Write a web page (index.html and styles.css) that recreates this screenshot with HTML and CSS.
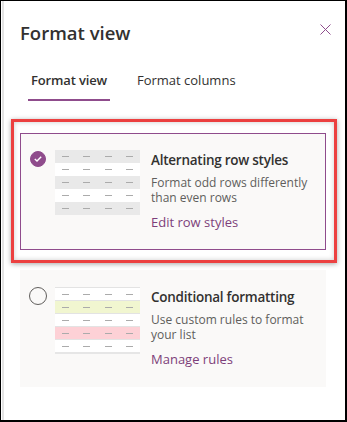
FILE: index.html
```html
<!DOCTYPE html>
<html lang="en">
<head>
  <meta charset="UTF-8" />
  <title>Format view</title>
  <link rel="stylesheet" href="styles.css">
</head>
<body>
  <div class="frame">
    <div class="panel">
      <div class="header">
        <h2 class="title">Format view</h2>
        <button class="close" aria-label="Close">
          <svg width="11" height="11" viewBox="0 0 11 11">
            <path d="M0.5 0.5 L10.5 10.5 M10.5 0.5 L0.5 10.5" stroke="#8f4c8c" stroke-width="1" fill="none" />
          </svg>
        </button>
      </div>

      <!-- Tabs -->
      <div class="tabs">
        <span class="tab active">Format view</span>
        <span class="tab">Format columns</span>
      </div>

      <div class="options">
        <div class="highlight">
          <div class="option selected">
            <div class="radio-slot"><span class="radio checked">
              <svg width="8" height="6" viewBox="0 0 8 6">
                <path d="M0.8 3 L3 5 L7.2 0.8" stroke="#fff" stroke-width="1.4" fill="none" />
              </svg>
            </span></div>
            <div class="thumb">
              <div class="row gray"><i></i><i></i><i></i><i></i></div>
              <div class="row"><i></i><i></i><i></i><i></i></div>
              <div class="row gray"><i></i><i></i><i></i><i></i></div>
              <div class="row"><i></i><i></i><i></i><i></i></div>
              <div class="row gray"><i></i><i></i><i></i><i></i></div>
            </div>
            <div class="text">
              <div class="opt-title">Alternating row styles</div>
              <div class="opt-desc">Format odd rows differently than even rows</div>
              <a class="opt-link">Edit row styles</a>
            </div>
          </div>
        </div>

        <div class="option">
          <div class="radio-slot"><span class="radio"></span></div>
          <div class="thumb lined">
            <div class="row"><i></i><i></i><i></i><i></i></div>
            <div class="row green"><i></i><i></i><i></i><i></i></div>
            <div class="row"><i></i><i></i><i></i><i></i></div>
            <div class="row pink"><i></i><i></i><i></i><i></i></div>
            <div class="row"><i></i><i></i><i></i><i></i></div>
          </div>
          <div class="text">
            <div class="opt-title">Conditional formatting</div>
            <div class="opt-desc">Use custom rules to format your list</div>
            <a class="opt-link">Manage rules</a>
          </div>
        </div>
      </div>
    </div>
  </div>
</body>
</html>
```

FILE: styles.css
```css
html, body {
  margin: 0;
  background: #fff;
}
body {
  font-family: "Open Sans", "Noto Sans", sans-serif;
  color: #323130;
}
.frame {
  width: 347px;
  height: 422px;
  box-sizing: border-box;
  border: 1px solid #000;
  border-right-width: 2px;
  border-bottom-width: 2px;
  padding-left: 1px;
}
.panel {
  height: 100%;
  box-sizing: border-box;
  border-left: 2px solid #e3e3e3;
  padding: 0 19px 0 16px;
}
.header {
  display: flex;
  justify-content: space-between;
  align-items: flex-start;
  padding-top: 18px;
}
.title {
  margin: 0;
  font-size: 18.5px;
  line-height: 28px;
  font-weight: 600;
}
.close {
  border: none;
  background: none;
  padding: 0;
  margin: 5px -5px 0 0;
  width: 11px;
  height: 11px;
  display: flex;
}
.tabs {
  display: flex;
  gap: 24px;
  margin: 23px 0 0 8px;
}
.tab {
  font-size: 13px;
  line-height: 20px;
  padding: 0 3px 9px;
  border-bottom: 2px solid transparent;
}
.tab.active {
  font-weight: 600;
  letter-spacing: -0.15px;
  border-bottom-color: #8f4c8c;
}
.options {
  margin-top: 18px;
}
.highlight {
  margin: 0 -11px 0 -9px;
  border: 3px solid #ec4040;
  padding: 11px 8px 10px 6px;
  box-shadow: 0 1px 5px rgba(0,0,0,0.35), inset 0 0 5px rgba(0,0,0,0.2);
  background: #fff;
}
.option {
  display: flex;
  align-items: flex-start;
  height: 117px;
  box-sizing: border-box;
  border: 1px solid transparent;
  padding: 16px 8px 0;
  background: #faf9f8;
}
.highlight + .option {
  margin-top: 7px;
}
.option.selected {
  border-color: #8f4c8c;
}
.radio-slot {
  flex-shrink: 0;
  width: 18px;
  height: 18px;
  display: flex;
  align-items: center;
  justify-content: center;
  margin-right: 8px;
}
.radio {
  width: 18px;
  height: 18px;
  box-sizing: border-box;
  border: 1px solid #605e5c;
  border-radius: 50%;
}
.radio.checked {
  width: 16px;
  height: 16px;
  background: #8f4c8c;
  border-color: #8f4c8c;
  display: flex;
  align-items: center;
  justify-content: center;
}
.thumb {
  width: 85px;
  flex-shrink: 0;
}
.row {
  height: 13px;
  box-sizing: border-box;
  display: flex;
  align-items: center;
  justify-content: space-around;
  background: #fff;
}
.row i {
  width: 7px;
  height: 1px;
  background: #ababab;
}
.row.gray { background: #e9e9e9; }
.row.green { background: #f1f6d0; }
.row.pink { background: #fdd1d6; }
.lined .row {
  border-top: 1px solid #e3e3e3;
}
.lined {
  border-bottom: 2px solid #e6e6e6;
}
.text {
  margin-left: 11px;
}
.opt-title {
  font-size: 13.5px;
  letter-spacing: -0.25px;
  line-height: 20px;
  font-weight: 600;
}
.opt-desc {
  margin-top: 5px;
  font-size: 12px;
  line-height: 15px;
  color: #605e5c;
}
.opt-link {
  display: block;
  margin-top: 7px;
  font-size: 13px;
  line-height: 20px;
  color: #7d3f7a;
}
```
